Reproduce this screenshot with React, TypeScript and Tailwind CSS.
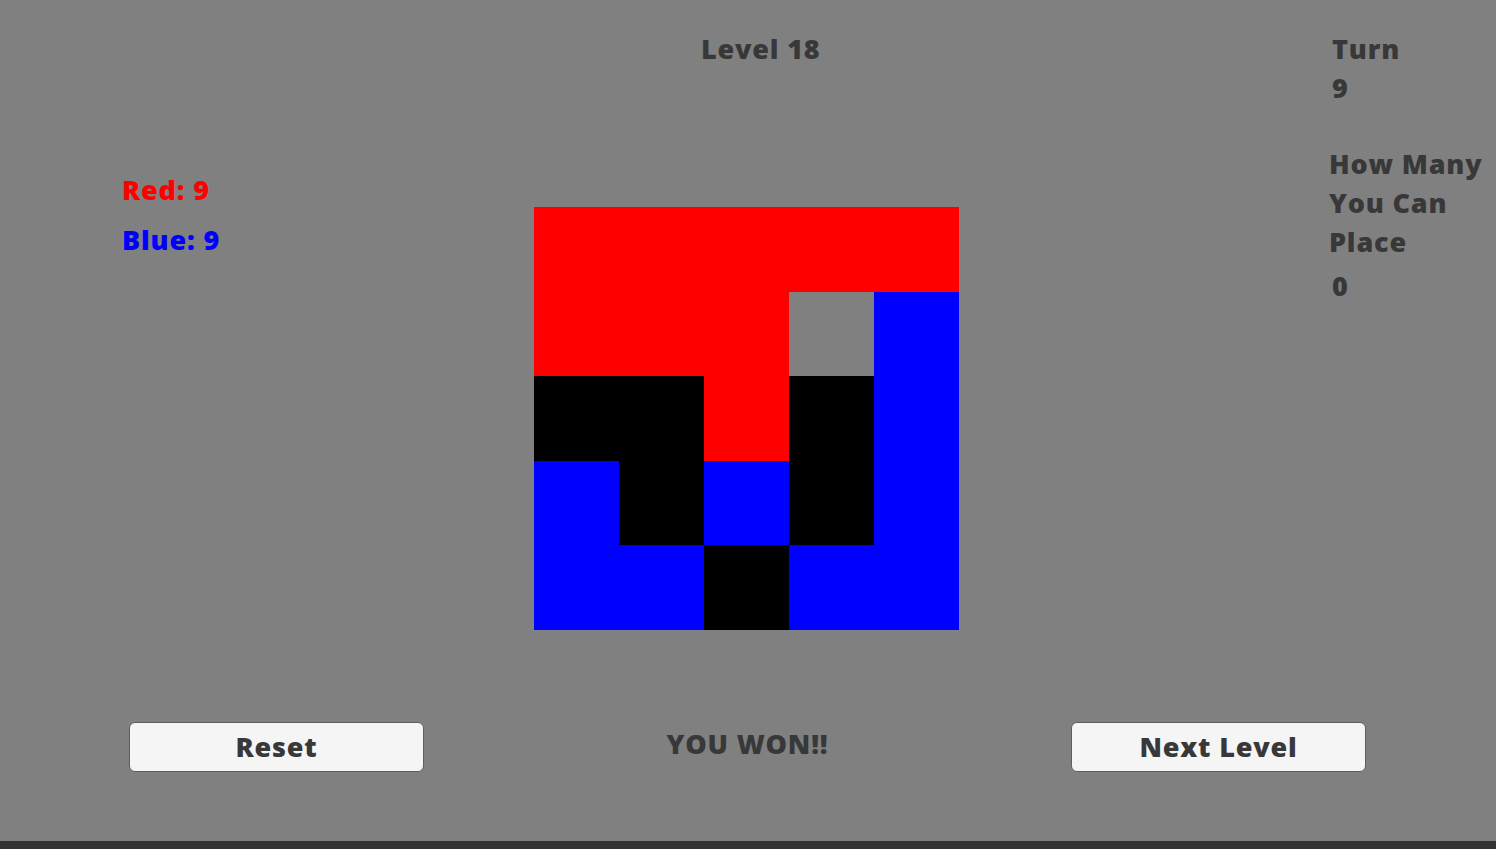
import React from 'react';

type Cell = 'R' | 'B' | 'K' | 'G';

const board: Cell[][] = [
  ['R', 'R', 'R', 'R', 'R'],
  ['R', 'R', 'R', 'G', 'B'],
  ['K', 'K', 'R', 'K', 'B'],
  ['B', 'K', 'B', 'K', 'B'],
  ['B', 'B', 'K', 'B', 'B'],
];

const cellColor: Record<Cell, string> = {
  R: 'bg-[#ff0000]',
  B: 'bg-[#0000ff]',
  K: 'bg-black',
  G: 'bg-[#808080]',
};

const App: React.FC = () => {
  return (
    <div className="h-[849px] w-full flex flex-col bg-[#808080] text-[#383838] font-['Open_Sans','Liberation_Sans',sans-serif] font-extrabold text-[27px] tracking-[0.03em] overflow-hidden">
      <div className="flex h-[722px]">
        <div className="w-[534px] pl-[122px] pt-[165px] leading-[50px]">
          <div className="text-[#ff0000]">Red: 9</div>
          <div className="text-[#0000ff]">Blue: 9</div>
        </div>

        <div className="w-[425px] flex flex-col">
          <div className="h-[207px] pt-[29px] leading-[39px] pl-[167px] whitespace-nowrap">Level 18</div>
          <div className="grid grid-cols-5 grid-rows-5 h-[423px]">
            {board.flat().map((c, i) => (
              <div key={i} className={cellColor[c]} />
            ))}
          </div>
        </div>

        <div className="flex-1 pl-[370px] pt-[29px] leading-[39px] whitespace-nowrap">
          <div className="pl-[3px]">Turn</div>
          <div className="pl-[3px]">9</div>
          <div className="mt-[37px]">How Many</div>
          <div>You Can</div>
          <div>Place</div>
          <div className="pl-[3px] mt-[5px]">0</div>
        </div>
      </div>

      <div className="flex items-start h-[119px] pl-[129px] pr-[130px]">
        <button className="w-[295px] h-[50px] bg-[#f5f5f5] border border-[#5e5e5e] rounded-[6px] text-[#383838] flex items-center justify-center">
          Reset
        </button>
        <div className="flex-1 h-[44px] flex items-center justify-center">YOU WON!!</div>
        <button className="w-[295px] h-[50px] bg-[#f5f5f5] border border-[#5e5e5e] rounded-[6px] text-[#383838] flex items-center justify-center">
          Next Level
        </button>
      </div>

      <div className="h-[8px] bg-[#333333]" />
    </div>
  );
};

export default App;
